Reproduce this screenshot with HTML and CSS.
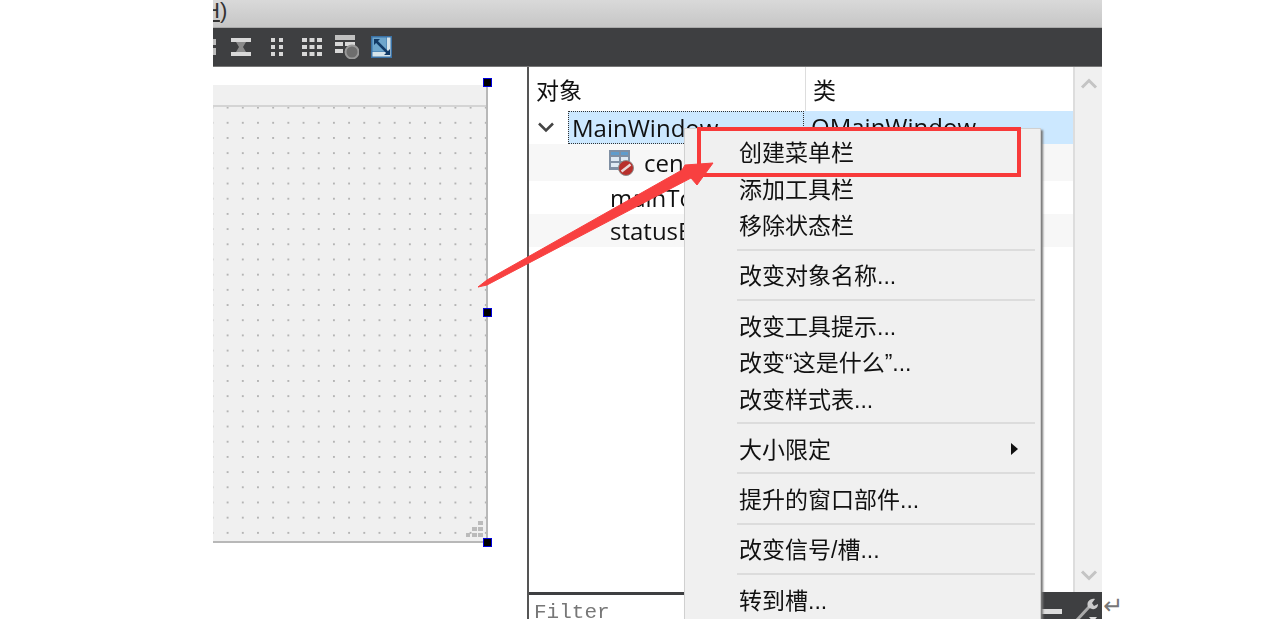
FILE: index.html
```html
<!DOCTYPE html>
<html lang="en">
<head>
    <meta charset="UTF-8">
    <title>Qt Designer</title>
    <link rel="stylesheet" href="styles.css">
</head>
<body>
    <div class="shot">
        <div class="titlebar"><span class="title-text"><u>H</u>)</span></div>

        <div class="toolbar">
            <svg class="tool" width="3" height="16" viewBox="0 0 3 16" fill="#bdbdbd">
                <path d="M0 0h3v6H0zM0 9h3v7H0z"/>
            </svg>
            <svg class="tool tool-break" width="20" height="20" viewBox="0 0 20 20">
                <path d="M0 1h20v4H0zM0 15h20v4H0z" fill="#d8d8d8"/>
                <path d="M5 5h10l-3 5 3 5H5l3-5z" fill="#8a8a8a"/>
            </svg>
            <svg class="tool tool-grid2" width="14" height="20" viewBox="0 0 14 20" fill="#d8d8d8">
                <path d="M1 1h4v4H1zM9 1h4v4H9zM1 8h4v4H1zM9 8h4v4H9zM1 15h4v4H1zM9 15h4v4H9z"/>
            </svg>
            <svg class="tool tool-grid3" width="20" height="20" viewBox="0 0 20 20" fill="#d8d8d8">
                <path d="M0 1h5v4H0zM7.500 1h5v4h-5zM15 1h5v4h-5zM0 8h5v4H0zM7.500 8h5v4h-5zM15 8h5v4h-5zM0 15h5v4H0zM7.500 15h5v4h-5zM15 15h5v4h-5z"/>
            </svg>
            <svg class="tool tool-form" width="24" height="24" viewBox="0 0 24 24">
                <path d="M0 0h20v5H0z" fill="#c0c0c0"/>
                <path d="M0 7h8v4H0zM10 7h10v4H10zM0 14h8v4H0z" fill="#d8d8d8"/>
                <circle cx="17" cy="17" r="6.500" fill="#6e6e6e" stroke="#999" stroke-width="2"/>
            </svg>
            <svg class="tool tool-adjust" width="21" height="22" viewBox="0 0 21 22">
                <path d="M0 0h21v22H0z" fill="#3a72a6"/>
                <path d="M1.500 1.500h14v14h-14z" fill="#6ea6cc"/>
                <path d="M16 1.500h3.500v19H1.500V16H16z" fill="#d6e4ea"/>
                <path d="M5 5l12 12" stroke="#123a66" stroke-width="2.500"/>
                <path d="M3 3h6L3 9zM19 19h-6l6-6z" fill="#123a66"/>
            </svg>
        </div>

        <div class="workspace">
            <div class="canvas">
                <div class="form">
                    <div class="form-menubar"></div>
                    <div class="form-body"></div>
                    <svg class="grip" width="18" height="18" viewBox="0 0 18 18" fill="#bbb">
                        <path d="M12 0h5v4h-5zM6 6h5v4H6zM12 6h5v4h-5zM0 12h4v4H0zM6 12h5v4H6zM12 12h5v4h-5z"/>
                    </svg>
                </div>
                <span class="handle handle-top"></span>
                <span class="handle handle-mid"></span>
                <span class="handle handle-bottom"></span>
            </div>

            <div class="inspector">
                <div class="tree">
                    <div class="tree-main">
                        <div class="tree-head">
                            <div class="col-name">对象</div>
                            <div class="col-class">类</div>
                        </div>
                        <div class="row row-selected">
                            <svg class="chevron" width="18" height="11" viewBox="0 0 18 11">
                                <path d="M2 1.500l7 7 7-7" fill="none" stroke="#444" stroke-width="2.500"/>
                            </svg>
                            <div class="col-name focus">MainWindow</div>
                            <div class="col-class">QMainWindow</div>
                        </div>
                        <div class="row row-alt row-tall">
                            <svg class="widget-icon" width="25" height="26" viewBox="0 0 25 26">
                                <path d="M0 0h21v20H0z" fill="#7f8fa3"/>
                                <path d="M2 2h8v3H2zM12 2h7v3h-7z" fill="#5f9ccc"/>
                                <path d="M2 7h8v4H2zM12 7h7v4h-7zM2 13h8v4H2z" fill="#dfeaf3"/>
                                <circle cx="17" cy="18" r="7.500" fill="#b8302c" stroke="#8c8c8c"/>
                                <path d="M12.500 21.500l9-7" stroke="#e8d8d8" stroke-width="2.500"/>
                            </svg>
                            <div class="child-name">centralwidget</div>
                        </div>
                        <div class="row"><div class="child-name no-icon">mainToolBar</div></div>
                        <div class="row row-alt"><div class="child-name no-icon">statusBar</div></div>
                    </div>
                    <div class="scrollbar">
                        <svg width="18" height="11" viewBox="0 0 18 11"><path d="M2 9.500l7-7 7 7" fill="none" stroke="#c4c4c4" stroke-width="3"/></svg>
                        <svg width="18" height="11" viewBox="0 0 18 11"><path d="M2 1.500l7 7 7-7" fill="none" stroke="#c4c4c4" stroke-width="3"/></svg>
                    </div>
                </div>
                <div class="filter-bar">
                    <div class="filter-input">Filter</div>
                    <div class="filter-tools">
                        <span class="minus"></span>
                        <svg class="wrench" width="24" height="27" viewBox="0 0 24 27">
                            <path d="M2 26L15 12" stroke="#aaa" stroke-width="3"/>
                            <path d="M14 12c-2-5 2-9 7-8l-3 4 2 3 4-2c0 5-5 7-10 3z" fill="#ccc"/>
                            <path d="M15 22h8l-4 5z" fill="#ddd"/>
                        </svg>
                    </div>
                </div>
            </div>
        </div>

        <div class="menu">
            <div class="menu-item">创建菜单栏</div>
            <div class="menu-item">添加工具栏</div>
            <div class="menu-item">移除状态栏</div>
            <div class="menu-sep"></div>
            <div class="menu-item">改变对象名称...</div>
            <div class="menu-sep"></div>
            <div class="menu-item">改变工具提示...</div>
            <div class="menu-item">改变“这是什么”...</div>
            <div class="menu-item">改变样式表...</div>
            <div class="menu-sep"></div>
            <div class="menu-item has-sub">大小限定<span class="sub-arrow"></span></div>
            <div class="menu-sep"></div>
            <div class="menu-item">提升的窗口部件...</div>
            <div class="menu-sep"></div>
            <div class="menu-item">改变信号/槽...</div>
            <div class="menu-sep"></div>
            <div class="menu-item">转到槽...</div>
        </div>

        <div class="callout"></div>
        <svg class="arrow" width="260" height="150" viewBox="0 0 260 150">
            <path d="M1 139L10 132 205 22l3-5 28-2-16 22-6-7L10 137z" fill="#f84040" stroke="#f84040" stroke-linejoin="round"/>
        </svg>
    </div>
    <span class="return-mark">↵</span>
</body>
</html>
```

FILE: styles.css
```css
html, body {
    margin: 0;
    height: 100%;
    background-color: #fff;
    overflow: hidden;
}
body {
    display: flex;
    align-items: flex-start;
    padding-left: 213px;
    font-family: "Open Sans", "Noto Sans CJK SC", sans-serif;
    color: #111;
}
.shot {
    position: relative;
    display: flex;
    flex-direction: column;
    width: 889px;
    height: 619px;
    flex: none;
    overflow: hidden;
    filter: blur(0.4px);
}
.titlebar {
    height: 28px;
    flex: none;
    overflow: hidden;
    background: linear-gradient(#d9d9d9, #c6c6c6);
    border-bottom: 1px solid #aaa;
    box-sizing: border-box;
}
.title-text {
    display: block;
    margin-left: -9px;
    font-size: 22px;
    line-height: 22px;
    font-family: "Liberation Sans", sans-serif;
    color: #333;
}
.toolbar {
    height: 39px;
    flex: none;
    display: flex;
    align-items: center;
    background-color: #3e3f41;
    border-bottom: 1px solid #777;
    box-sizing: border-box;
}
.tool-break { margin-left: 15px; }
.tool-grid2 { margin-left: 19px; }
.tool-grid3 { margin-left: 18px; }
.tool-form { margin-left: 13px; }
.tool-adjust { margin-left: 12px; }

.workspace {
    flex: 1;
    display: flex;
    min-height: 0;
}
.canvas {
    position: relative;
    width: 314px;
    flex: none;
    padding-top: 18px;
    box-sizing: border-box;
}
.form {
    position: relative;
    width: 275px;
    height: 458px;
    display: flex;
    flex-direction: column;
    background-color: #f0f0f0;
    border-right: 2px solid #b8b8b8;
    border-bottom: 2px solid #b8b8b8;
    box-sizing: border-box;
}
.form-menubar {
    height: 20px;
    flex: none;
    border-bottom: 2px solid #d4d4d4;
}
.form-body {
    flex: 1;
    background-image: radial-gradient(circle, #b4b4b4 0.9px, transparent 1.1px);
    background-size: 15.2px 15.2px;
    background-position: 7px -7px;
}
.grip {
    position: absolute;
    right: 2px;
    bottom: 2px;
}
.handle {
    position: absolute;
    left: 270px;
    width: 7px;
    height: 7px;
    background-color: #000;
    border: 1px solid #0000e0;
}
.handle-top { top: 11px; }
.handle-mid { top: 241px; }
.handle-bottom { top: 471px; }

.inspector {
    flex: 1;
    display: flex;
    flex-direction: column;
    min-width: 0;
    border-left: 2px solid #555;
}
.tree {
    flex: 1;
    display: flex;
    min-height: 0;
}
.tree-main {
    flex: 1;
    min-width: 0;
    border-right: 2px solid #ddd;
}
.tree-head {
    display: flex;
    height: 44px;
    font-size: 23px;
    line-height: 46px;
}
.tree-head .col-name {
    width: 277px;
    padding-left: 7px;
    box-sizing: border-box;
    border-right: 1px solid #ddd;
}
.tree-head .col-class { padding-left: 7px; }
.row {
    display: flex;
    align-items: center;
    height: 33px;
    font-size: 24px;
    white-space: nowrap;
    overflow: hidden;
}
.row-tall { height: 37px; }
.row-alt { background-color: #f7f7f7; }
.chevron {
    flex: none;
    margin-left: 8px;
    margin-right: 13px;
}
.row-selected .focus {
    width: 236px;
    height: 33px;
    flex: none;
    padding-left: 3px;
    line-height: 31px;
    box-sizing: border-box;
    background-color: #cce8ff;
    border: 1px dotted #333;
}
.row-selected .col-class {
    flex: 1;
    height: 33px;
    padding-left: 7px;
    line-height: 31px;
    background-color: #cce8ff;
}
.widget-icon {
    flex: none;
    margin-left: 80px;
    margin-right: 10px;
}
.no-icon { margin-left: 81px; }
.scrollbar {
    width: 27px;
    flex: none;
    display: flex;
    flex-direction: column;
    justify-content: space-between;
    align-items: center;
    padding: 11px 0 11px;
    box-sizing: border-box;
    background-color: #f0f0f0;
}
.filter-bar {
    height: 27px;
    flex: none;
    display: flex;
    border-top: 3px solid #3e3f41;
    box-sizing: border-box;
    background-color: #3e3f41;
}
.filter-input {
    width: 510px;
    flex: none;
    padding-left: 5px;
    box-sizing: border-box;
    background-color: #fff;
    font-family: "Liberation Mono", monospace;
    font-size: 21px;
    line-height: 36px;
    color: #777;
    overflow: hidden;
}
.filter-tools {
    flex: 1;
    display: flex;
    align-items: flex-start;
    padding-left: 2px;
}
.minus {
    width: 21px;
    height: 5px;
    margin-top: 14px;
    background-color: #ddd;
}
.wrench { margin-left: 12px; }

.menu {
    position: absolute;
    left: 471px;
    top: 128px;
    width: 357px;
    height: 500px;
    padding-top: 5px;
    box-sizing: border-box;
    background-color: #f0f0f0;
    border: 1px solid #d0d0d0;
    box-shadow: 2px 2px 2px #777;
    font-family: "Liberation Sans", "Noto Sans CJK SC", sans-serif;
    font-size: 23px;
    color: #111;
}
.menu-item {
    position: relative;
    height: 36.500px;
    line-height: 38px;
    padding-left: 54px;
    white-space: nowrap;
}
.menu-sep {
    height: 2px;
    margin: 5px 5px 6.750px 52px;
    background-color: #dcdcdc;
}
.sub-arrow {
    position: absolute;
    right: 22px;
    top: 12px;
    border-left: 7px solid #111;
    border-top: 6px solid transparent;
    border-bottom: 6px solid transparent;
}
.callout {
    position: absolute;
    left: 484px;
    top: 127px;
    width: 324px;
    height: 50px;
    box-sizing: border-box;
    border: 4px solid #f83a3a;
}
.arrow {
    position: absolute;
    left: 264px;
    top: 148px;
}
.return-mark {
    margin-top: 590px;
    margin-left: 1px;
    font-family: "DejaVu Sans", sans-serif;
    font-size: 24px;
    line-height: 32px;
    color: #777;
}
```
